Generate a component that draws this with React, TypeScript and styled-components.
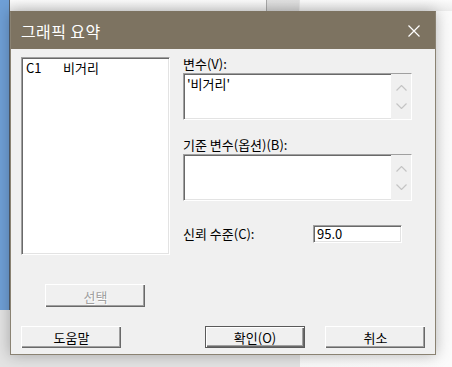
import React from "react";
import styled, { createGlobalStyle } from "styled-components";

const GlobalStyle = createGlobalStyle`
  html, body {
    margin: 0;
    padding: 0;
  }
  body {
    width: 452px;
    height: 367px;
    overflow: hidden;
    font-family: "Noto Sans CJK KR", "Noto Sans", sans-serif;
  }
`;

const Desktop = styled.div`
  position: relative;
  width: 452px;
  height: 367px;
  overflow: hidden;
  background: linear-gradient(90deg, #f4f4f4, #fbfbfb);
`;

const BlueWindow = styled.div`
  position: absolute;
  left: 0;
  top: 0;
  width: 9px;
  height: 310px;
  background: #6f9fd6;
  border-right: 1px solid #55606e;
`;

const TopWindow = styled.div`
  position: absolute;
  left: 10px;
  top: 0;
  right: 0;
  height: 11px;
  background: linear-gradient(#fbfbfb, #ececec);
`;

const TopCell = styled.div`
  margin-left: 256px;
  width: 32px;
  height: 100%;
  background: linear-gradient(#e2e2e2, #d6d6d6);
  border-left: 1px solid #a9a9a9;
  border-right: 1px solid #e6e6e6;
`;

const BottomWindow = styled.div`
  position: absolute;
  left: 0;
  top: 310px;
  width: 300px;
  bottom: 0;
  background: #e3e3e3;
`;

const Dialog = styled.div`
  position: absolute;
  left: 10px;
  top: 11px;
  width: 426px;
  height: 344px;
  box-sizing: border-box;
  border: 1px solid #8a8272;
  border-top-color: #7d7361;
  background: #f0f0f0;
  box-shadow: 0 0 14px rgba(0, 0, 0, 0.28);
  display: flex;
  flex-direction: column;
`;

const TitleBar = styled.div`
  height: 37px;
  flex: none;
  background: #7d7361;
  display: flex;
  align-items: center;
  justify-content: space-between;
  padding: 0 15px 0 10px;
`;

const Title = styled.span`
  color: #ffffff;
  font-size: 16px;
  letter-spacing: 0.4px;
  line-height: 1;
`;

const CloseIcon = () => (
  <svg width="12" height="12" viewBox="0 0 12 12">
    <path d="M0.5 0.5 L11.5 11.5 M11.5 0.5 L0.5 11.5" stroke="#ffffff" strokeWidth="1.2" fill="none" />
  </svg>
);

const Body = styled.div`
  padding: 8px 10px 0 10px;
  display: flex;
  flex-direction: column;
  font-size: 13px;
  color: #000;
`;

const TopSection = styled.div`
  display: flex;
  gap: 13px;
`;

const LeftColumn = styled.div`
  width: 149px;
  display: flex;
  flex-direction: column;
`;

const sunken = `
  background: #ffffff;
  box-sizing: border-box;
  border-top: 1px solid #a0a0a0;
  border-left: 1px solid #a0a0a0;
  border-right: 1px solid #ffffff;
  border-bottom: 1px solid #ffffff;
  box-shadow: inset 1px 1px 0 #696969, inset -1px -1px 0 #e3e3e3;
`;

const ListBox = styled.div`
  ${sunken}
  height: 198px;
  padding: 2px 4px;
`;

const ListRow = styled.div`
  display: flex;
  line-height: 15px;
`;

const ItemCode = styled.span`
  width: 37px;
`;

const Button = styled.button<{ $default?: boolean }>`
  width: 100px;
  height: 22px;
  padding: 0;
  box-sizing: border-box;
  font-family: inherit;
  font-size: 13px;
  line-height: 1;
  color: #000;
  background: #f0f0f0;
  border: ${(p) => (p.$default ? "1px solid #5a5a5a" : "0")};
  border-top: 1px solid ${(p) => (p.$default ? "#5a5a5a" : "#ffffff")};
  border-left: 1px solid ${(p) => (p.$default ? "#5a5a5a" : "#ffffff")};
  box-shadow: ${(p) =>
    p.$default
      ? "inset 1px 1px 0 #ffffff, inset -1px -1px 0 #696969, inset -2px -2px 0 #a0a0a0"
      : "inset -1px -1px 0 #696969, inset -2px -2px 0 #a0a0a0"};

  &:disabled {
    color: #a0a0a0;
    text-shadow: 1px 1px 0 #ffffff;
  }
`;

const SelectButton = styled(Button)`
  height: 23px;
  margin: 29px 0 0 24px;
`;

const RightColumn = styled.div`
  width: 229px;
  display: flex;
  flex-direction: column;
`;

const Label = styled.label<{ $gap?: number }>`
  display: block;
  line-height: 14px;
  margin-top: ${(p) => p.$gap ?? 0}px;
  margin-bottom: 2px;
`;

const TextArea = styled.div`
  ${sunken}
  height: 47px;
  display: flex;
`;

const TextValue = styled.div`
  flex: 1;
  padding: 3px 3px;
  line-height: 14px;
`;

const ScrollStrip = styled.div`
  width: 20px;
  background: #f0f0f0;
  display: flex;
  flex-direction: column;
  align-items: center;
  justify-content: space-between;
  padding: 11px 0 10px;
`;

const Chevron = ({ up }: { up?: boolean }) => (
  <svg width="11" height="6" viewBox="0 0 11 6">
    <path
      d={up ? "M0.5 5.5 L5.5 0.5 L10.5 5.5" : "M0.5 0.5 L5.5 5.5 L10.5 0.5"}
      stroke="#c4c4c4"
      strokeWidth="1.2"
      fill="none"
    />
  </svg>
);

const ConfidenceRow = styled.div`
  display: flex;
  align-items: center;
  margin-top: 23px;
`;

const ConfidenceLabel = styled.span`
  width: 130px;
`;

const NumberBox = styled.div`
  ${sunken}
  width: 89px;
  height: 18px;
  padding: 0 3px;
  line-height: 16px;
`;

const ButtonRow = styled.div`
  display: flex;
  margin-top: 19px;
`;

const Spacer = styled.div<{ $w: number }>`
  width: ${(p) => p.$w}px;
`;

const App = () => {
  return (
    <>
      <GlobalStyle />
      <Desktop>
        <BlueWindow />
        <TopWindow>
          <TopCell />
        </TopWindow>
        <BottomWindow />

        <Dialog>
          <TitleBar>
            <Title>그래픽 요약</Title>
            <CloseIcon />
          </TitleBar>
          <Body>
            <TopSection>
              <LeftColumn>
                <ListBox>
                  <ListRow>
                    <ItemCode>C1</ItemCode>
                    <span>비거리</span>
                  </ListRow>
                </ListBox>
                <SelectButton disabled>선택</SelectButton>
              </LeftColumn>

              <RightColumn>
                <Label>변수(V):</Label>
                <TextArea>
                  <TextValue>'비거리'</TextValue>
                  <ScrollStrip>
                    <Chevron up />
                    <Chevron />
                  </ScrollStrip>
                </TextArea>

                <Label $gap={18}>기준 변수(옵션)(B):</Label>
                <TextArea>
                  <TextValue />
                  <ScrollStrip>
                    <Chevron up />
                    <Chevron />
                  </ScrollStrip>
                </TextArea>

                <ConfidenceRow>
                  <ConfidenceLabel>신뢰 수준(C):</ConfidenceLabel>
                  <NumberBox>95.0</NumberBox>
                </ConfidenceRow>
              </RightColumn>
            </TopSection>

            <ButtonRow>
              <Button>도움말</Button>
              <Spacer $w={84} />
              <Button $default>확인(O)</Button>
              <Spacer $w={20} />
              <Button>취소</Button>
            </ButtonRow>
          </Body>
        </Dialog>
      </Desktop>
    </>
  );
};

export default App;
